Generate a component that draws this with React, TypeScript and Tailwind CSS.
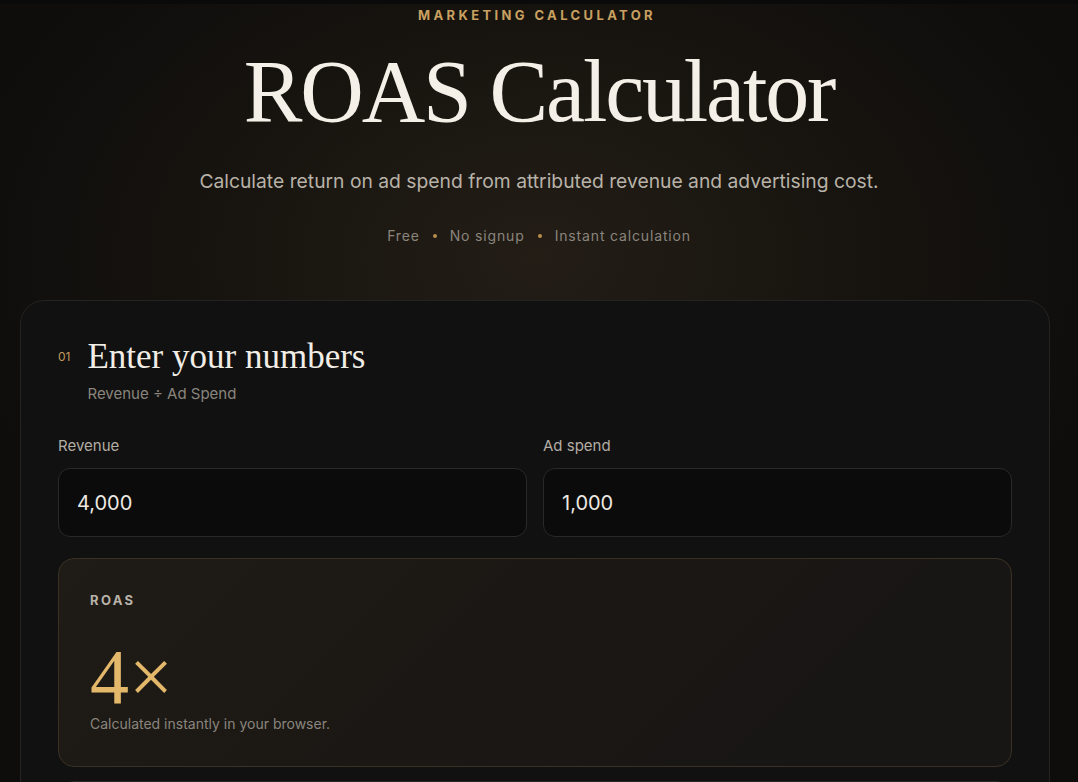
import React, { useState } from 'react';

const sans = "font-['Inter','Liberation_Sans',sans-serif]";
const serif = "font-['Liberation_Serif','DejaVu_Serif',serif]";

const parse = (v: string) => Number(v.replace(/[^0-9.]/g, '')) || 0;

const NumberField: React.FC<{ label: string; value: string; onChange: (v: string) => void }> = ({ label, value, onChange }) => (
  <div className="flex flex-col">
    <label className="text-[15px] leading-[22px] text-[#b3ada4]">{label}</label>
    <input
      type="text"
      value={value}
      onChange={e => onChange(e.target.value)}
      className="mt-[11px] h-[69px] w-full rounded-xl border border-[#2a2927] bg-[#0b0b0b] px-[18px] text-[20px] text-[#ede9e2] outline-none focus:border-[#5a4a30]"
    />
  </div>
);

const App: React.FC = () => {
  const [revenue, setRevenue] = useState('4,000');
  const [spend, setSpend] = useState('1,000');

  const r = parse(revenue);
  const s = parse(spend);
  const roas = s > 0 ? Math.round((r / s) * 100) / 100 : 0;

  return (
    <div className={`${sans} min-h-[782px] bg-[#0e0d0c] bg-[radial-gradient(ellipse_55%_45%_at_50%_28%,#231d16_0%,#17140f_55%,#0e0d0c_100%)] overflow-hidden`}>
      <div className="h-1 bg-[#0a0a0a]" />

      <header className="flex flex-col items-center text-center">
        <p className="mt-[3px] mr-[4px] text-[13px] leading-4 font-bold tracking-[0.26em] text-[#c9a060]">MARKETING CALCULATOR</p>
        <h1 className={`${serif} mt-[25px] text-[88px] leading-none tracking-[-0.025em] text-[#f4f0e8]`}>ROAS Calculator</h1>
        <p className="mt-[31px] text-[19.3px] leading-7 text-[#b8b2a8]">
          Calculate return on ad spend from attributed revenue and advertising cost.
        </p>
        <div className="mt-[31px] flex items-center gap-[13px] text-[14px] leading-5 tracking-[0.06em] text-[#8a857d]">
          <span>Free</span>
          <span className="h-[4px] w-[4px] rounded-full bg-[#b88d4d]" />
          <span>No signup</span>
          <span className="h-[4px] w-[4px] rounded-full bg-[#b88d4d]" />
          <span>Instant calculation</span>
        </div>
      </header>

      <section className="ml-5 mr-7 mt-[54px] rounded-3xl border border-[#252321] bg-[#111111] px-[37px] pt-[36px] pb-10">
        <div className="flex items-start gap-[17px]">
          <span className="text-[12px] leading-10 text-[#c29a5c]">01</span>
          <div className="flex flex-col">
            <h2 className={`${serif} text-[35px] leading-10 text-[#f2eee6]`}>Enter your numbers</h2>
            <p className="mt-[6px] text-[15px] leading-[22px] text-[#8a857d]">Revenue ÷ Ad Spend</p>
          </div>
        </div>

        <div className="mt-[30px] grid grid-cols-2 gap-4">
          <NumberField label="Revenue" value={revenue} onChange={setRevenue} />
          <NumberField label="Ad spend" value={spend} onChange={setSpend} />
        </div>

        <div className="mt-[21px] rounded-2xl border border-[#3a3124] bg-[linear-gradient(135deg,#1f1b16_0%,#1a1714_55%,#171615_100%)] px-[31px] pt-[33px] pb-[34px]">
          <p className="text-[13px] leading-4 font-bold tracking-[0.18em] text-[#b8b2a8]">ROAS</p>
          <p className={`${serif} mt-[30px] text-[78px] leading-none text-[#e3b86b]`}>{roas}×</p>
          <p className="text-[14px] leading-4 text-[#8a857d]">Calculated instantly in your browser.</p>
        </div>

        <div className="mt-[14px] h-24 rounded-2xl border border-[#2a2826] bg-[#0f0f10]" />
      </section>
    </div>
  );
};

export default App;
